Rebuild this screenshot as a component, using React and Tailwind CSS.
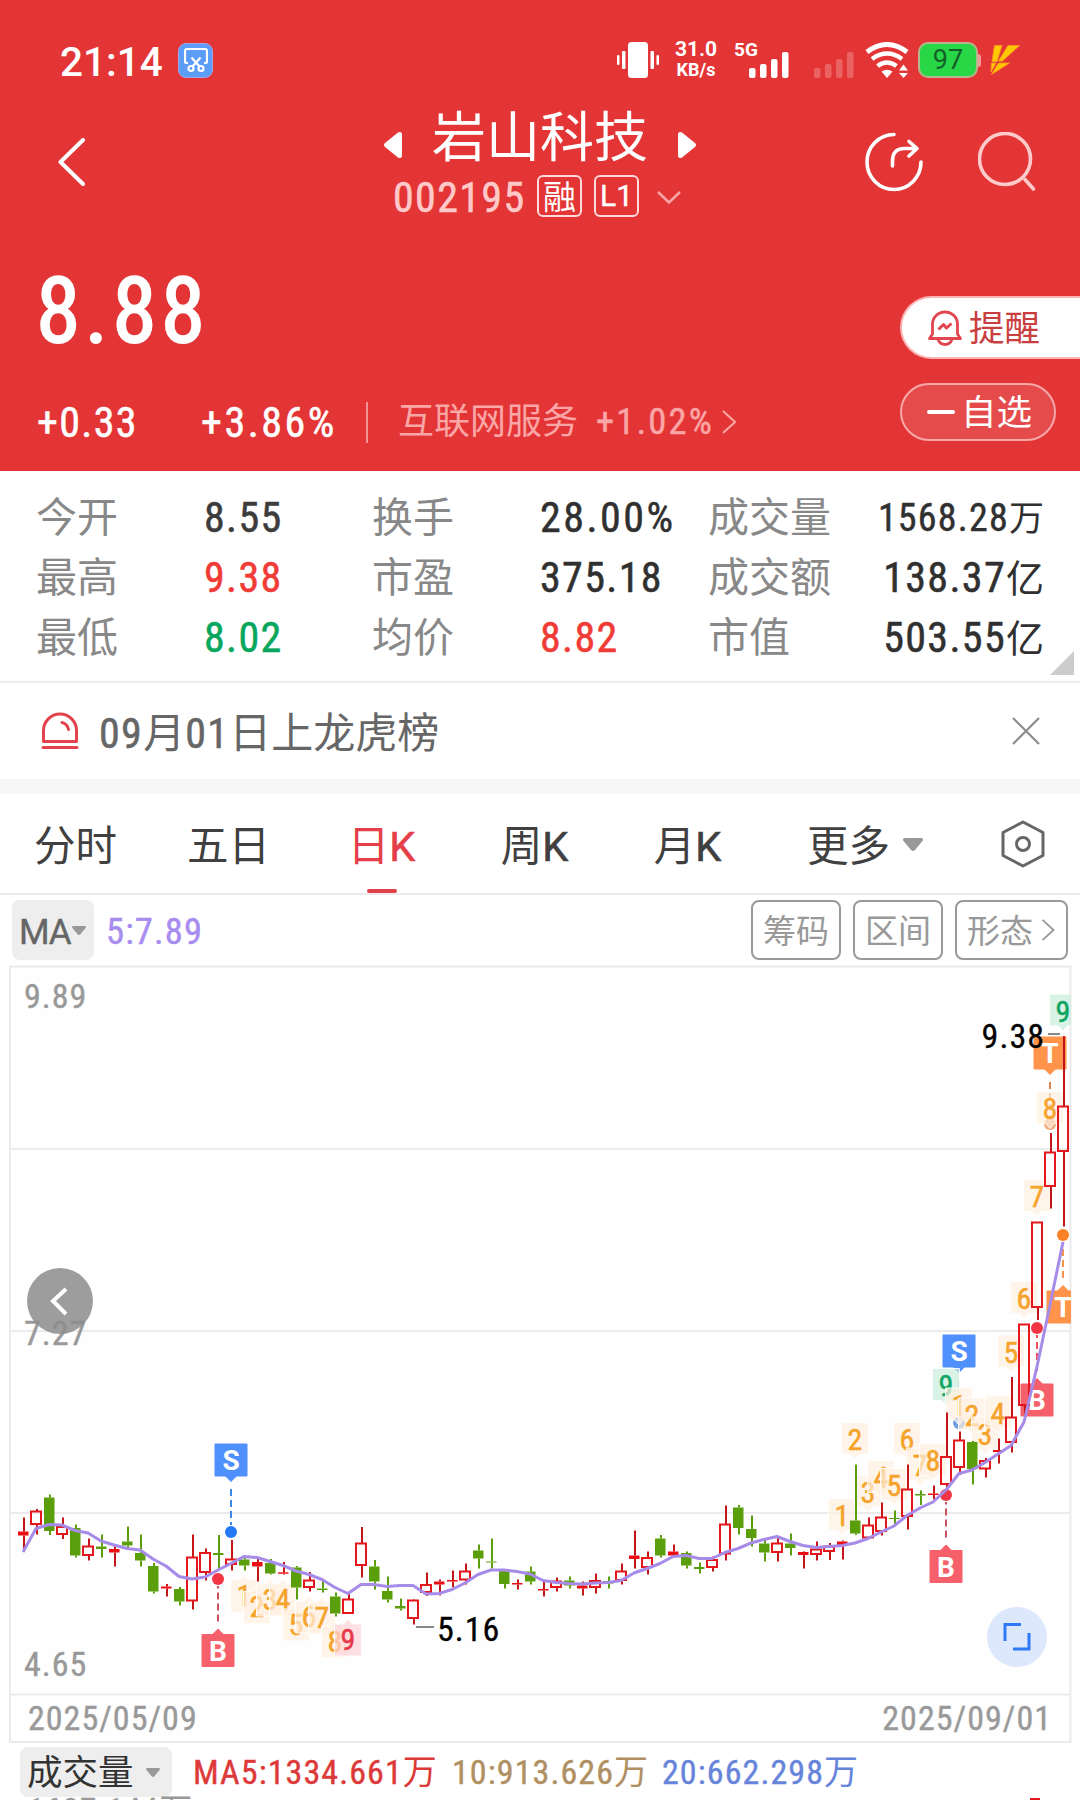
import clsx from 'clsx'

const STATS = [
  { label: '今开', value: '8.55', color: 'text-[#3c3c3c]' },
  { label: '换手', value: '28.00%', color: 'text-[#303030]' },
  { label: '成交量', value: '1568.28', unit: '万', small: true },
  { label: '最高', value: '9.38', color: 'text-[#f03b37]' },
  { label: '市盈', value: '375.18', color: 'text-[#303030]' },
  { label: '成交额', value: '138.37', unit: '亿' },
  { label: '最低', value: '8.02', color: 'text-[#06a65c]' },
  { label: '均价', value: '8.82', color: 'text-[#f03b37]' },
  { label: '市值', value: '503.55', unit: '亿' },
]

const TABS = ['分时', '五日', '日K', '周K', '月K']

// [type, high, bodyTop, bodyBottom, low] - u: hollow up, f: flat red, d: down
const CANDLES = [
  ['f', 1517.5, 1531.5, 1535.5, 1550], ['u', 1509, 1511, 1524, 1534.5], ['d', 1494.5, 1497.5, 1531, 1535],
  ['u', 1517.5, 1526.5, 1534, 1539], ['d', 1524.5, 1528, 1555.5, 1557.5], ['u', 1538.5, 1546, 1555, 1560.5],
  ['d', 1534.5, 1546.5, 1549, 1557.5], ['f', 1546, 1549, 1552.5, 1566.5], ['d', 1526.5, 1541.5, 1545.5, 1549],
  ['d', 1534.5, 1553, 1560.5, 1566.5], ['d', 1563, 1566, 1591.5, 1593.5], ['f', 1584, 1586.5, 1588.5, 1596.5],
  ['d', 1587, 1589, 1601.5, 1605.5], ['u', 1534.5, 1557, 1600.5, 1609.5], ['u', 1548.5, 1552.5, 1572, 1580.5],
  ['d', 1535, 1553, 1555, 1570], ['u', 1540, 1559, 1564, 1570.5], ['d', 1558, 1559.5, 1565.5, 1570.5],
  ['f', 1557, 1562, 1566.5, 1581.5], ['d', 1559, 1563, 1573.5, 1574.5], ['f', 1562, 1572.3, 1573.7, 1574.5],
  ['d', 1566, 1567.5, 1587.5, 1599.5], ['u', 1572, 1580, 1587, 1591.5], ['d', 1580, 1588.5, 1590, 1592.5],
  ['d', 1592.5, 1596.5, 1613.5, 1616.5], ['u', 1594, 1599, 1613, 1613], ['u', 1527, 1543, 1565, 1577.5],
  ['d', 1560, 1566.5, 1581.5, 1589.5], ['d', 1576.5, 1591, 1599.5, 1602.5], ['d', 1598.5, 1606, 1608.5, 1610.5],
  ['u', 1599.5, 1600, 1618, 1624.5], ['u', 1572.5, 1584.5, 1592, 1596], ['f', 1579.5, 1581.5, 1584.5, 1595.5],
  ['f', 1570.5, 1580, 1581.5, 1587.5], ['u', 1563.5, 1571, 1579.5, 1584.5], ['d', 1544.5, 1550.5, 1558.5, 1568.5],
  ['d', 1538.5, 1561.5, 1562.5, 1568.5], ['d', 1569.5, 1571, 1584, 1588.5], ['f', 1579.5, 1583, 1584.5, 1589.5],
  ['d', 1566.5, 1571.5, 1581.5, 1584.5], ['f', 1581.5, 1589, 1590.5, 1596.5], ['u', 1577.5, 1581, 1587, 1591.5],
  ['d', 1576.5, 1580.5, 1585.5, 1588.5], ['f', 1581.5, 1585.5, 1588.5, 1595.5], ['u', 1573.5, 1580.5, 1587, 1593.5],
  ['d', 1576.5, 1581, 1583.5, 1588.5], ['u', 1563.5, 1571, 1580, 1584.5], ['f', 1530.5, 1555.5, 1559, 1568.5],
  ['u', 1551.5, 1557.5, 1567, 1574.5], ['d', 1535, 1538.5, 1555.5, 1557.5], ['f', 1544.5, 1551.5, 1555.5, 1555.5],
  ['d', 1551.5, 1553, 1565.5, 1568.5], ['d', 1562.5, 1567, 1569, 1573.5], ['u', 1556.5, 1559.5, 1567, 1571.5],
  ['u', 1505.5, 1524, 1553.5, 1560.5], ['d', 1505, 1507.5, 1528, 1534.5], ['d', 1515.5, 1529, 1538, 1546.5],
  ['d', 1538.5, 1543.5, 1552.5, 1561.5], ['u', 1537, 1543, 1552, 1561.5], ['d', 1533.5, 1543.5, 1548, 1555.5],
  ['f', 1551.5, 1552, 1555, 1568.5], ['u', 1541.5, 1549, 1554, 1560.5], ['u', 1543, 1546, 1551, 1560],
  ['f', 1540.5, 1541.5, 1545, 1559.5], ['d', 1464.5, 1520.5, 1533.5, 1535], ['u', 1517.5, 1525, 1537.5, 1538],
  ['u', 1502.5, 1517, 1531, 1535.5], ['d', 1510.5, 1518, 1519, 1526], ['u', 1464.5, 1489, 1516, 1529.5],
  ['d', 1490.5, 1494, 1495.5, 1505], ['f', 1485.5, 1493.5, 1495, 1499.5], ['u', 1412.5, 1456.5, 1484, 1490],
  ['u', 1431.5, 1440, 1467, 1475], ['d', 1441, 1442, 1469, 1484.5], ['u', 1458, 1460.5, 1468.5, 1477.5],
  ['f', 1438.5, 1450, 1452, 1463.5], ['u', 1377, 1417, 1442, 1452.5], ['u', 1324, 1324, 1405, 1416],
  ['u', 1222, 1222, 1307, 1320], ['u', 1133, 1152, 1186, 1208.5], ['u', 1036, 1106, 1151, 1226.5],
]

const MA5 = [
  1552, 1528.5, 1524.5, 1525, 1530.5, 1533, 1541, 1545, 1548.5, 1550, 1559, 1566, 1576.5, 1579, 1577, 1570, 1563.5,
  1556.5, 1557.5, 1561.5, 1565.5, 1571, 1574.5, 1579.5, 1587.5, 1593.5, 1584.5, 1584.5, 1586.5, 1585.5, 1585.5, 1594,
  1593.5, 1589.5, 1583, 1574.5, 1570, 1570, 1571.5, 1574, 1580.5, 1582.5, 1583.5, 1584, 1583, 1582.5, 1580.5, 1573,
  1568.5, 1563.5, 1556.5, 1555.5, 1558.5, 1558.5, 1552.5, 1548.5, 1543, 1539.5, 1536.5, 1541.5, 1545.5, 1547.5, 1546.5,
  1545.5, 1543, 1538.5, 1532, 1526, 1515.5, 1508, 1502, 1490, 1473.5, 1470, 1462.5, 1454, 1445.5, 1422, 1366.5, 1305,
  1242,
]

// [candle index, text, centre y, pointer direction, tone]
const COUNTS = [
  [17, '1', 1595, 'up'], [18, '2', 1606.5, 'up'], [19, '3', 1599, 'up'], [20, '4', 1599, 'up'],
  [21, '5', 1624, 'up'], [22, '6', 1616, 'up'], [23, '7', 1617, 'up'], [24, '8', 1641, 'up'], [25, '9', 1639, 'up', 'red'],
  [63, '1', 1515.5], [64, '2', 1439.5], [65, '3', 1492], [66, '4', 1477.5], [67, '5', 1485.5], [68, '6', 1439.5],
  [69, '7', 1465], [70, '8', 1460.5], [71, '9', 1385.5, 'down', 'green'], [72, '1', 1405], [73, '2', 1415],
  [74, '3', 1434], [75, '4', 1413], [76, '5', 1352], [77, '6', 1298.5], [78, '7', 1196.5], [79, '8', 1108.5],
  [80, '9', 1011, 'down', 'green'],
]

const COUNT_COLORS = {
  orange: { bg: '#fff0e0', text: '#f5a32b' },
  red: { bg: '#ffd3d6', text: '#e8394a' },
  green: { bg: '#c9eddc', text: '#0ea663' },
}

const TAGS = [
  { i: 15, letter: 'B', y: 1650.5, dir: 'up', dot: 1579, color: '#f5606b', line: '#c9505c', dotColor: '#f23645' },
  { i: 16, letter: 'S', y: 1460, dir: 'down', dot: 1532, color: '#4f90fc', line: '#3f86ea', dotColor: '#2479f7' },
  { i: 71, letter: 'B', y: 1566.5, dir: 'up', dot: 1495, color: '#f5606b', line: '#c9505c', dotColor: '#f23645' },
  { i: 72, letter: 'S', y: 1351, dir: 'down', dot: 1423, color: '#4f90fc', line: '#c3d4f2', dotColor: '#6f9fe0' },
  { i: 78, letter: 'B', y: 1400, dir: 'up', dot: 1328, color: '#f5606b', line: '#f0505c', dotColor: '#f23645' },
  { i: 79, letter: 'T', y: 1053, dir: 'down', dot: 1124, color: '#ff944a', line: '#d98550', dotColor: '#f3a878' },
  { i: 80, letter: 'T', y: 1307, dir: 'up', dot: 1235, color: '#ff944a', line: '#f7924a', dotColor: '#fa8124' },
]

const xAt = (i) => 23 + i * 13

const Digits = ({ className, wide = false, children }) => (
  <span
    className={clsx(
      "font-['Roboto_Condensed',sans-serif] [-webkit-text-stroke:0.012em]",
      wide ? 'tracking-[0.06em]' : 'tracking-[0.032em]',
      className
    )}
  >
    {children}
  </span>
)

const Signal = ({ className }) => (
  <svg viewBox="0 0 40 26" className={clsx('h-[26px] w-10', className)} fill="currentColor">
    <rect x="0" y="16" width="6.5" height="10" rx="2" />
    <rect x="11" y="12" width="6.5" height="14" rx="2" />
    <rect x="22" y="7" width="6.5" height="19" rx="2" />
    <rect x="33" y="0" width="6.5" height="26" rx="2" />
  </svg>
)

const Caret = ({ className }) => (
  <svg viewBox="0 0 20 13" className={className} fill="currentColor">
    <path d="M1.5 0h17q2.5.5 1 3l-7.5 9q-2 2-4 0L.5 3q-1.5-2.5 1-3z" />
  </svg>
)

const ChevronRight = ({ className }) => (
  <svg viewBox="0 0 14 24" className={className} fill="none" stroke="currentColor" strokeWidth="2">
    <path d="M1 1l12 11L1 23" />
  </svg>
)

const StatusBar = () => (
  <div className="flex h-9 items-center pl-[60px]">
    <span className="w-[118px] pt-1 text-[40.5px] leading-none font-medium">21:14</span>
    <div className="flex h-[35px] w-[35px] items-center justify-center rounded-lg border border-[#a9a3e0] bg-[#5b9df9]">
      <svg viewBox="0 0 24 24" className="size-6" fill="none" stroke="#fff" strokeWidth="2.2">
        <path d="M4 15H2.500Q1 15 1 13.500V3Q1 1 3 1h18q2 0 2 2v10.500Q23 15 21.500 15H20" />
        <path d="M7.500 9.500l8 9M16.500 9.500l-8 9" />
        <circle cx="7" cy="20.5" r="2.5" />
        <circle cx="17" cy="20.5" r="2.5" />
      </svg>
    </div>
    <svg viewBox="0 0 42 36" className="ml-[404px] h-9 w-[42px]" fill="#fff">
      <rect x="11" width="20" height="36" rx="3.5" />
      <rect x="5" y="9" width="3.5" height="18" rx="1" />
      <rect x="33.5" y="9" width="3.5" height="18" rx="1" />
      <rect x="0" y="13" width="2.5" height="10" rx="1" />
      <rect x="39.5" y="13" width="2.5" height="10" rx="1" />
    </svg>
    <div className="ml-4 flex w-[42px] flex-col items-center leading-none font-bold">
      <span className="text-[21px] leading-[19px]">31.0</span>
      <span className="text-[18px] leading-[22px]">KB/s</span>
    </div>
    <div className="ml-[17px] flex h-9 w-[55px] items-end">
      <span className="w-[15px] self-start text-[19px] leading-[16px] font-bold">5G</span>
      <Signal className="shrink-0" />
    </div>
    <div className="flex h-9 items-end pl-[25px]">
      <Signal className="text-[#eb6262]" />
    </div>
    <svg viewBox="0 0 44 36" className="ml-[11px] h-9 w-11" fill="none" stroke="#fff" strokeWidth="5">
      <path d="M2 10Q22-5 42 10" />
      <path d="M7 17Q22 6 37 17" strokeWidth="4.5" />
      <path d="M12.500 24Q22 17 31.500 24" strokeWidth="4.5" />
      <path d="M16.500 29.500Q22 26 27.500 29.500L22 36z" fill="#fff" stroke="none" />
      <path d="M34 28.500l4.500-6 4.500 6zM34 31h9l-4.500 5z" fill="#fff" stroke="none" />
    </svg>
    <div className="ml-[9px] flex h-9 w-[60px] items-center justify-center rounded-[10px] border-2 border-[#b7b58e] bg-[#28d745] text-[27px] leading-none text-[#15602a]">
      97
    </div>
    <div className="h-[13px] w-[3px] rounded-r-sm bg-[#f09a9a]" />
    <svg viewBox="0 0 30 30" className="ml-[9px] size-[30px]" fill="#ffc800">
      <path d="M4.500 .5h7.500L7 16.500H2zM18 .5h11.500L12.500 16H8.500z" stroke="#ff9a1f" strokeWidth="0.8" />
      <path d="M1.500 18H6L1 27zM8.500 18h11L1.500 29.500z" stroke="#ff9a1f" strokeWidth="0.8" />
    </svg>
  </div>
)

const TitleBar = () => (
  <div className="mt-6 flex h-[120px] items-center pl-[58px]">
    <svg viewBox="0 0 27 48" className="h-12 w-[27px]" fill="none" stroke="#fff" strokeWidth="4" strokeLinecap="round" strokeLinejoin="round">
      <path d="M25 2L2.500 24 25 46" />
    </svg>
    <div className="ml-[299px] flex h-[120px] w-[312px] flex-col">
      <div className="flex h-[71px] items-center justify-between">
        <svg viewBox="0 0 18 26" className="mt-3.5 h-[26px] w-[18px]" fill="#fff">
          <path d="M18 2v22q-.5 3-4 1.500L1 15q-2-2 0-4L14 .5Q17.500-1 18 2z" />
        </svg>
        <h1 className="pt-0.5 text-[54px] leading-none font-normal">岩山科技</h1>
        <svg viewBox="0 0 18 26" className="mt-3.5 h-[26px] w-[18px] rotate-180" fill="#fff">
          <path d="M18 2v22q-.5 3-4 1.500L1 15q-2-2 0-4L14 .5Q17.500-1 18 2z" />
        </svg>
      </div>
      <div className="flex h-[45px] items-center pl-[9px] leading-none text-[#ffc9c9]">
        <Digits className="w-36 pt-[5px] text-[42px]">002195</Digits>
        <span className="flex h-[42px] w-[45px] items-center justify-center rounded-md border-2 border-[#ffdada] pt-[3px] text-[33px] text-white">融</span>
        <span className="ml-3 flex h-[42px] w-[45px] items-center justify-center rounded-md border-2 border-[#ffdada] text-[30px] text-white [-webkit-text-stroke:0.4px]">L1</span>
        <svg viewBox="0 0 24 13" className="mt-1 ml-[18px] h-[13px] w-6 shrink-0" fill="none" stroke="#f7a5a5" strokeWidth="2.5">
          <path d="M1 1l11 10.500L23 1" />
        </svg>
      </div>
    </div>
    <svg viewBox="0 0 60 60" className="ml-[168px] size-[60px]" fill="none" stroke="#fff" strokeWidth="3.6" strokeLinecap="round" strokeLinejoin="round">
      <path d="M30 2.500A27 27.500 0 1 0 57 30" />
      <path d="M28.500 34v-5q0-12.500 12-12.500H52" />
      <path d="M45 9.500l8 7-8 7.500" />
    </svg>
    <svg viewBox="0 0 60 60" className="ml-[54px] size-[60px]" fill="none" stroke="#ffcaca" strokeWidth="3.6" strokeLinecap="round">
      <circle cx="27" cy="27" r="25.5" />
      <path d="M47 47.500l8.500 9.500" />
    </svg>
  </div>
)

const PriceSection = () => (
  <div className="flex justify-between">
    <div className="pt-[45px] pl-[37px]">
      <div className="ml-[-1px] h-[90px] text-[90px] leading-[90px] tracking-[0.045em]">
        <span className="font-['Roboto_Condensed',sans-serif] [-webkit-text-stroke:1.8px]">8.88</span>
      </div>
      <div className="mt-11 flex h-[42px] items-center leading-none">
        <Digits className="w-[164px] pt-0.5 text-[42px]">+0.33</Digits>
        <Digits wide className="w-[165px] pt-0.5 text-[42px]">+3.86%</Digits>
        <span className="h-[41px] w-0.5 bg-[#f39292]" />
        <span className="ml-[30px] w-[198px] text-[36px] text-[#fba6a6]">互联网服务</span>
        <Digits wide className="w-[126px] text-[36.5px] text-[#fba6a6]">+1.02%</Digits>
        <ChevronRight className="h-6 w-3.5 text-[#fba6a6]" />
      </div>
    </div>
    <div className="flex w-[180px] flex-col gap-[25px] pt-[74px]">
      <button className="flex h-[63px] items-center rounded-l-full border-2 border-r-0 border-[#fbb5b5] bg-white pl-[26px] text-[35.5px] leading-none text-[#c93f3f]">
        <svg viewBox="0 0 34 36" className="mr-[7px] h-9 w-[34px]" fill="none" stroke="#e2474f" strokeWidth="2.8" strokeLinejoin="round">
          <path d="M1.500 28.500H32.500L29.500 24V14A12.500 12 0 0 0 4.500 14V24z" />
          <path d="M10 29.500q2 5 7 5t7-5" />
          <path d="M10.500 19.500l5-5 3 3.500 5-4.500" strokeWidth="3" />
        </svg>
        <span className="pt-1">提醒</span>
      </button>
      <button className="mt-[-1px] flex h-[58px] w-[156px] items-center rounded-full border-2 border-[#f6a8a8] bg-[#e64b4c] pl-[25px] text-[35.5px] leading-none">
        <span className="mr-[6px] h-1 w-7 shrink-0 rounded bg-white" />
        <span className="pt-1">自选</span>
      </button>
    </div>
  </div>
)

const Stats = () => (
  <div className="relative h-[212px] border-b-2 border-[#ededed] pt-[17px] pl-9">
    <div className="grid grid-cols-[336px_336px_336px] leading-none">
      {STATS.map((s) => (
        <div key={s.label} className="flex h-[60px] items-center">
          <span className={clsx('text-[41px] text-[#888]', s.unit ? 'w-[130px]' : 'w-[168px]')}>{s.label}</span>
          {s.unit ? (
            <span className="flex-1 text-right text-[#303030]">
              <Digits className={s.small ? 'text-[38px]' : 'text-[42px]'}>{s.value}</Digits>
              <span className={s.small ? 'text-[35px]' : 'text-[38px]'}>{s.unit}</span>
            </span>
          ) : (
            <Digits wide={s.value.endsWith('%')} className={clsx('text-[42px]', s.color)}>{s.value}</Digits>
          )}
        </div>
      ))}
    </div>
    <svg viewBox="0 0 24 24" className="absolute right-1.5 bottom-1.5 size-6" fill="#ccc">
      <path d="M24 0v24H0z" />
    </svg>
  </div>
)

const Notice = () => (
  <div className="flex h-24 items-center pr-10 pl-[41px]">
    <svg viewBox="0 0 38 38" className="h-[38px] w-[38px]" fill="none" stroke="#e2444f" strokeWidth="3" strokeLinecap="round" strokeLinejoin="round">
      <path d="M2.500 29.500V18.500A16.500 16.500 0 0 1 35.500 18.500V29.500z" />
      <path d="M2 35.500h34" />
      <path d="M21 10.500q5.500 1.500 6.500 7" />
    </svg>
    <span className="ml-5 pt-[5px] text-[42px] leading-none text-[#666]">
      <Digits>09</Digits>月<Digits>01</Digits>日上龙虎榜
    </span>
    <svg viewBox="0 0 28 28" className="ml-auto size-7" fill="none" stroke="#8c8c8c" strokeWidth="2.2">
      <path d="M1 1l26 26M27 1L1 27" />
    </svg>
  </div>
)

const Tabs = () => (
  <div className="flex h-[101px] border-b-2 border-[#ebebeb] text-[41.5px] leading-none text-[#404040]">
    {TABS.map((tab) => (
      <div key={tab} className={clsx('flex w-[153px] flex-col items-center pr-0.5', tab === '日K' && 'text-[#e63e48]')}>
        <span className="flex h-[95px] items-center pt-[11px]">
          <span>{tab[0]}</span>
          <span className={clsx(tab[1] === 'K' && '[-webkit-text-stroke:0.015em]')}>{tab[1]}</span>
        </span>
        {tab === '日K' && <span className="h-1 w-[30px] rounded-sm bg-[#e2414b]" />}
      </div>
    ))}
    <div className="flex h-[95px] items-center pt-[11px] pl-[42px]">
      更多
      <Caret className="mt-[-5px] ml-[13px] h-[13px] w-5 text-[#999]" />
    </div>
    <svg viewBox="0 0 44 48" className="mt-[26px] ml-[78px] h-12 w-11" fill="none" stroke="#666" strokeWidth="3" strokeLinejoin="round">
      <path d="M22 2L42 12.500V35.500L22 46 2 35.500V12.500z" />
      <circle cx="22" cy="24" r="6.5" />
    </svg>
  </div>
)

const Indicator = () => (
  <div className="flex h-[70px] items-center px-3 leading-none">
    <div className="flex h-[60px] w-[82px] items-center rounded-lg bg-[#eee] pl-[7px] text-[35px] text-[#666]">
      <span className="w-[53px] pt-1 tracking-[-0.03em] [-webkit-text-stroke:0.012em]">MA</span>
      <Caret className="h-[9px] w-3.5 text-[#999]" />
    </div>
    <Digits className="ml-3 pt-1 text-[36.5px] text-[#a78df0]">5:7.89</Digits>
    <div className="ml-auto flex gap-3 text-[33px] text-[#999]">
      <button className="h-[60px] w-[90px] rounded-lg border-2 border-[#999] pt-[3px]">筹码</button>
      <button className="h-[60px] w-[90px] rounded-lg border-2 border-[#999] pt-[3px]">区间</button>
      <button className="flex h-[60px] w-[113px] items-center rounded-lg border-2 border-[#999] pl-2.5">
        <span className="pt-[3px]">形态</span>
        <ChevronRight className="ml-2 h-[22px] w-3.5" />
      </button>
    </div>
  </div>
)

const Candle = ({ i, data: [type, high, top, bottom, low] }) => {
  const x = xAt(i)
  const color = type === 'd' ? '#5a9e0c' : '#ec0c12'
  const wick = type === 'd' ? '#5a9e0c' : '#c4161a'
  return (
    <g>
      {top > high && <path d={`M${x + 1} ${high}V${top}`} stroke={wick} strokeWidth="2" />}
      {low > bottom && <path d={`M${x + 1} ${bottom}V${low}`} stroke={wick} strokeWidth="2" />}
      {type === 'u' ? (
        <rect x={x - 5} y={top + 0.5} width="10" height={Math.max(bottom - top - 0.5, 2)} fill="none" stroke="#e3171c" strokeWidth="2" />
      ) : (
        <rect x={x - 5} y={top} width="10.5" height={bottom - top} fill={color} />
      )}
    </g>
  )
}

const Count = ({ i, text, y, dir = 'down', tone = 'orange' }) => {
  const x = xAt(i)
  const { bg, text: fill } = COUNT_COLORS[tone]
  const box =
    dir === 'down'
      ? `M${x - 13.5} ${y - 17}h27v32h-9l-4.5 5-4.5-5h-9z`
      : `M${x - 13.5} ${y + 17}h27v-32h-9l-4.5-5-4.5 5h-9z`
  return (
    <g>
      <path d={box} fill={bg} fillOpacity="0.7" stroke="#fff" strokeOpacity="0.9" strokeWidth="1" />
      <text x={x} y={y + 10.5} textAnchor="middle" fontSize="30" fill={fill} stroke={fill} strokeWidth="0.5">{text}</text>
    </g>
  )
}

const Tag = ({ i, letter, y, dir, dot, color, line, dotColor }) => {
  const x = xAt(i)
  const s = dir === 'up' ? -1 : 1
  return (
    <g>
      <path d={`M${x} ${y + s * 29}V${dot - s * 7}`} stroke={line} strokeWidth="2" strokeDasharray="7 4" />
      <circle cx={x} cy={dot} r="6" fill={dotColor} />
      <rect x={x - 16.5} y={y - 16.5} width="33" height="33" rx="1" fill={color} />
      <path d={`M${x - 6} ${y + s * 16}h12l-6 ${s * 6}z`} fill={color} />
      <text x={x} y={y + 10} textAnchor="middle" fontFamily="Roboto" fontSize="28" fontWeight="700" fill="#fff">{letter}</text>
    </g>
  )
}

const KLineChart = () => (
  <svg viewBox="0 965 1080 778" className="block h-[778px] w-[1080px] font-['Roboto_Condensed',sans-serif]">
    <defs>
      <clipPath id="plot">
        <rect x="10" y="966" width="1061" height="776" />
      </clipPath>
    </defs>
    <rect x="10" y="966.5" width="1060.5" height="840" fill="#fefefe" stroke="#ebebeb" strokeWidth="2" />
    {[1149, 1331, 1513, 1694.5, 1742].map((y) => (
      <path key={y} d={`M10 ${y}H1070`} stroke="#ebebeb" strokeWidth="2" />
    ))}
    <g fontSize="34" fill="#999" stroke="#999" strokeWidth="0.4" className="tracking-[0.03em]">
      <text x="24" y="1008">9.89</text>
      <text x="24" y="1345">7.27</text>
      <text x="24" y="1676">4.65</text>
      <text x="28" y="1730">2025/05/09</text>
      <text x="1052" y="1730" textAnchor="end">2025/09/01</text>
    </g>
    <g clipPath="url(#plot)">
      {TAGS.map((t) => (
        <Tag key={`${t.i}${t.letter}`} {...t} />
      ))}
      {COUNTS.map(([i, text, y, dir, tone]) => (
        <Count key={i} i={i} text={text} y={y} dir={dir} tone={tone} />
      ))}
      {CANDLES.map((data, i) => (
        <Candle key={i} i={i} data={data} />
      ))}
      <polyline points={MA5.map((y, i) => `${xAt(i)},${y}`).join(' ')} fill="none" stroke="#a78be8" strokeWidth="3" strokeLinejoin="round" />
    </g>
    <path d="M416 1627h18M1048 1034h12" stroke="#888" strokeWidth="1.8" />
    <g fontSize="34" fill="#000" stroke="#000" strokeWidth="0.3" className="tracking-[0.03em]">
      <text x="437" y="1641">5.16</text>
      <text x="1045" y="1048" textAnchor="end">9.38</text>
    </g>
    <circle cx="60" cy="1301" r="33" fill="#8c8c8c" fillOpacity="0.85" />
    <path d="M66 1289l-13 12 13 13" fill="none" stroke="#fff" strokeWidth="4" />
    <circle cx="1017" cy="1637" r="30" fill="#dde8fd" />
    <path d="M1021 1624.500h-16v16.500M1029 1633v16h-16" fill="none" stroke="#2f79f5" strokeWidth="3" />
  </svg>
)

const Volume = () => (
  <div className="flex h-[57px] flex-col pl-5 text-[34px] leading-none">
    <div className="mt-1 flex h-[50px] shrink-0 items-center">
      <div className="flex h-[50px] w-[152px] items-center rounded-lg bg-[#eee] pl-[7px] text-[#333]">
        <span className="w-[119px] pt-[3px] text-[35.5px]">成交量</span>
        <Caret className="h-[9px] w-3.5 text-[#999]" />
      </div>
      <span className="ml-[21px] w-[259px] text-[#dd3939]"><Digits>MA5:1334.661</Digits>万</span>
      <span className="w-[210px] text-[#b09062]"><Digits>10:913.626</Digits>万</span>
      <span className="text-[#6784db]"><Digits>20:662.298</Digits>万</span>
    </div>
    <div className="mt-px flex shrink-0 justify-between pr-[26px] pl-2 text-[33px] leading-[26px] text-[#999]">
      <span><Digits>1637.144</Digits>万</span>
      <span className="flex items-start gap-1">
        <span className="h-4 w-2.5 border-2 border-[#e3171c]" />
        <span className="mt-0.5 h-4 w-2.5 border-2 border-[#e3171c]" />
      </span>
    </div>
  </div>
)

export default function App() {
  return (
    <div className="h-[1800px] w-[1080px] overflow-hidden bg-white font-['Roboto','Noto_Sans_CJK_SC',sans-serif]">
      <header className="h-[471px] bg-[#e33536] pt-[42px] text-white">
        <StatusBar />
        <TitleBar />
        <PriceSection />
      </header>
      <Stats />
      <Notice />
      <div className="h-[15px] bg-[#f7f7f7]" />
      <Tabs />
      <Indicator />
      <KLineChart />
      <Volume />
    </div>
  )
}
